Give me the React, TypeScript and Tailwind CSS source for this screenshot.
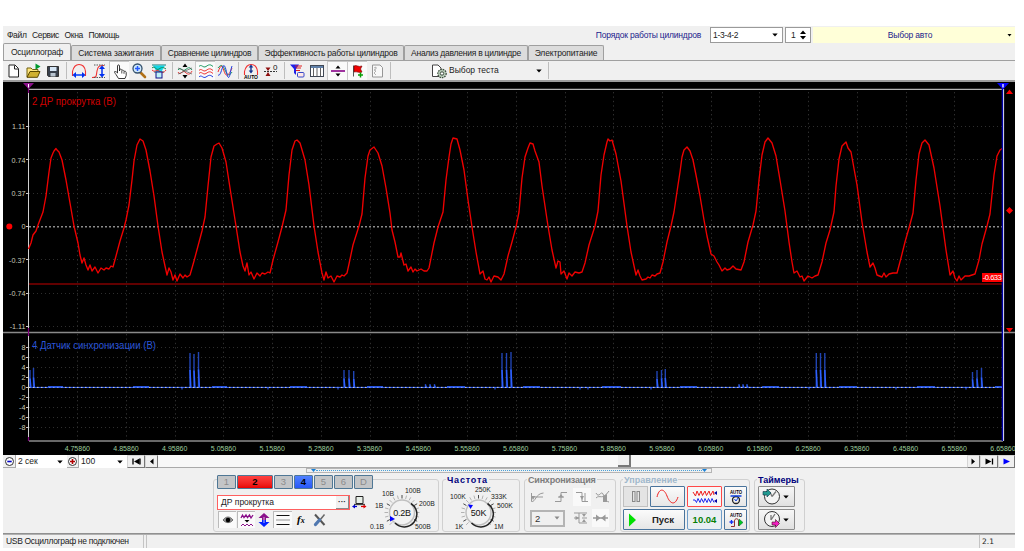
import type { ReactNode } from "react";
import clsx from "clsx";

const CHANNEL_TRACE =
  "28.5,249 31,243 33,235 36,231 38,225 43,212 46,196 49,172 51,158 53,153 54,151 56,148.5 57,150 59,152 62,160 64,170 66,180 70,203 74,226 78,243 80,255 82,263 84,258 86,265 88,270 90,265 92,271 95,267 98,273 101,268 104,270 106,268 109,269 111,266 113,267 116,256 120,241 124,228 126,220 129,205 132,180 134,161 137,145 140,139 143,141 146,150 150,171 154,196 158,226 162,252 165,266 167,275 169,268 171,272 173,280 175,275 177,281 180,274 183,278 185,275 187,277 190,275 194,261 198,246 202,231 205,217 208,186 211,157 214,146 217,144 219,143 222,148 226,162 230,188 236,226 240,252 243,266 245,271 247,263 249,275 251,272 254,279 257,273 260,276 262,273 265,274 268,272 270,273 273,260 278,242 282,227 286,210 289,175 292,150 295,141 297,140 300,143 305,160 309,185 314,226 318,252 322,273 324,280 326,272 328,278 331,276 334,282 337,276 340,277 " +
  "342,275 344,276 347,273 349,264 353,245 359,226 362,214 365,178 368,156 370,150 374,147 378,153 382,166 386,188 390,213 392,230 395,242 398,257 400,257 401,253 404,265 406,264 408,271 411,267 413,272 415,269 417,271 421,269 424,271 427,271 429,268 434,243 438,227 443,212 446,180 449,157 451,144 453,138 457,139 460,150 464,170 468,200 472,227 476,252 480,274 483,271 485,279 487,280 489,277 491,282 494,276 498,277 501,280 504,274 508,256 512,242 516,227 519,212 522,178 525,157 528,148 530,143 533,144 535,151 539,162 542,186 548,226 552,250 556,268 558,261 560,262 561,274 564,271 567,279 569,273 572,276 575,272 579,273 582,272 585,263 589,245 595,226 598,211 601,175 604,155 607,142 608,139 610,141 612,140 616,154 621,181 627,226 631,252 636,275 638,270 640,276 642,280 646,279 648,277 650,278 652,275 655,276 657,274 660,273 663,262 667,242 671,226 674,212 678,185 680,172 " +
  "682,157 684,150 687,147 690,151 693,160 696,175 700,196 704,220 707,236 711,254 714,256 717,262 719,265 722,271 725,268 727,270 730,269 733,266 736,269 741,270 744,262 748,242 753,225 756,211 759,180 762,155 765,142 768,138 772,143 776,156 780,180 785,211 789,242 792,262 794,273 797,271 800,277 802,276 804,281 808,276 812,278 815,276 818,275 822,262 826,243 830,230 834,212 836,186 839,159 842,146 846,142 848,148 851,152 857,185 862,222 867,252 870,267 873,263 875,268 877,275 882,277 884,273 886,277 889,274 893,273 897,273 901,258 905,242 909,228 913,213 916,180 919,154 922,143 925,140 929,145 934,168 940,206 946,250 950,275 953,271 955,278 957,281 959,276 961,280 965,276 969,276 975,274 979,260 982,244 987,226 990,214 994,175 997,156 1000,150 1003,148";

// [x, top] of every sync pulse
const PULSES = [
  [30, 370], [33.5, 368], [190, 353], [194, 354], [198.5, 352], [344, 370], [349, 370], [353.7, 371],
  [425.5, 384], [430, 384], [434.5, 384], [502, 353], [506.5, 353], [511, 352], [657, 371], [661.5, 370],
  [665.3, 369], [739, 384], [743, 384], [747, 384], [816.3, 353], [820.5, 353], [824.8, 353], [972.5, 372],
  [977, 370], [981.5, 368],
];

const BUMPS = [
  [48, 63], [133, 149], [212, 227], [290, 307], [367, 383], [447, 465], [523, 540], [602, 621], [680, 697],
  [762, 779], [839, 857], [917, 935], [995, 1003],
];

const DIPS = [182, 268, 338, 495, 580, 588, 651, 809, 896, 966];

const TIMES = Array.from({ length: 20 }, (_, i) => ({
  x: 77.3 + i * 48.72,
  label: (4.7586 + i * 0.1).toFixed(5),
}));

const VOLTS = ["1.11", "0.74", "0.37", "0", "-0.37", "-0.74", "-1.11"];
const SYNC_VOLTS = ["8", "6", "4", "2", "0", "-2", "-4", "-6", "-8"];

function Scope() {
  return (
    <svg width="1012" height="373" viewBox="3 82 1012 373" className="block shrink-0 bg-black">
      <g stroke="#2e2e2e" strokeWidth="1" strokeDasharray="1 3" fill="none">
        {TIMES.slice(0, -1).map(({ x }) => (
          <path key={x} d={`M${Math.round(x) + 0.5} 92V440`} strokeDasharray="1.4 3" />
        ))}
        {VOLTS.map((v, i) => (
          <path key={v} d={`M29 ${Math.round(127 + i * 33.3) - 0.5}H1002`} />
        ))}
        {SYNC_VOLTS.map((v, i) => (
          <path key={v} d={`M29 ${347.5 + i * 10}H1002`} />
        ))}
      </g>
      <path d="M29 226.8H1002" stroke="#8c8c8c" strokeWidth="1.5" strokeDasharray="2 2" />
      <path d="M29 89.3H1003" stroke="#b4b4b4" strokeWidth="1.2" />
      <path d="M3 332.5H1015" stroke="#8a8a8a" strokeWidth="1.6" />
      <path d="M29 441H1003" stroke="#686868" strokeWidth="1.8" />
      <path d="M28.5 92V441" stroke="#d0d0d0" strokeWidth="1" />
      <path d="M28.5 85V93M28.5 328V336M28.5 437V441" stroke="#80007d" strokeWidth="1.2" />
      <path d="M29 284H1003" stroke="#820000" strokeWidth="1.7" />
      <polyline points={CHANNEL_TRACE} fill="none" stroke="#f00000" strokeWidth="1.35" strokeLinejoin="round" />

      <path d="M29 387.4H1003" stroke="#2b5bff" strokeWidth="1" />
      <path d="M29 387.4H1003" stroke="#d8d8c8" strokeWidth="1" strokeDasharray="1.5 2.5" />
      <g stroke="#2e61ff" fill="none">
        {BUMPS.map(([a, b]) => (
          <path key={a} d={`M${a} 386.8H${b}`} strokeWidth="1.3" />
        ))}
        {DIPS.map((x) => (
          <path key={x} d={`M${x} 387V389.5`} strokeWidth="1" />
        ))}
        {PULSES.map(([x, top]) => (
          <g key={x}>
            <path d={`M${x} ${top}V387`} strokeWidth="1.4" opacity="0.7" />
            <path d={`M${x} ${top + (387 - top) * 0.5}L${x + 0.8} 387`} strokeWidth="1.5" />
          </g>
        ))}
      </g>

      <g fill="#c8c8b8" fontFamily="Liberation Sans, sans-serif" fontSize="7.2" textAnchor="end">
        {VOLTS.map((v, i) => (
          <text key={v} x="25.5" y={129.4 + i * 33.3}>
            {v}
          </text>
        ))}
        {SYNC_VOLTS.map((v, i) => (
          <text key={v} x="25.5" y={350 + i * 10}>
            {v}
          </text>
        ))}
      </g>
      <g stroke="#c8c8c8" strokeWidth="1">
        {VOLTS.map((v, i) => (
          <path key={v} d={`M26 ${Math.round(127 + i * 33.3) - 0.5}h2`} />
        ))}
        {SYNC_VOLTS.map((v, i) => (
          <path key={v} d={`M26 ${347.5 + i * 10}h2`} />
        ))}
      </g>
      <g fill="#9fce9f" fontFamily="Liberation Sans, sans-serif" fontSize="7" textAnchor="middle">
        {TIMES.map(({ x, label }) => (
          <text key={label} x={x} y="450.5">
            {label}
          </text>
        ))}
      </g>
      <text x="32" y="105" fill="#d00000" fontFamily="Liberation Sans, sans-serif" fontSize="10" textLength="84" lengthAdjust="spacingAndGlyphs">
        2 ДР прокрутка (В)
      </text>
      <text x="32" y="349" fill="#2b55d8" fontFamily="Liberation Sans, sans-serif" fontSize="10" textLength="124" lengthAdjust="spacingAndGlyphs">
        4 Датчик синхронизации (В)
      </text>

      <path d="M23 83h11l-5.5 6z" fill="#8a108a" />
      <path d="M28.5 84v3.5" stroke="#fff" strokeWidth="1" />
      <path d="M1002.5 84V441" stroke="#0000a8" strokeWidth="1.6" />
      <path d="M1003.6 89V441" stroke="#dcdcff" strokeWidth="1" />
      <path d="M997 83h12l-6 6.5z" fill="#0000ff" />
      <path d="M1003 84v3.5" stroke="#fff" strokeWidth="1.3" />
      <g fill="#ff0000">
        <circle cx="9.3" cy="226.5" r="3" />
        <path d="M1006 94h7l-3.5-4.5zM1006 328h7l-3.5 4.5zM1009.5 207l3.5 3.5-3.5 3.5-3.5-3.5z" />
        <rect x="982" y="273" width="20.500" height="9" />
      </g>
      <text x="982.8" y="280.3" fill="#fff" fontFamily="Liberation Sans, sans-serif" fontSize="7.6" textLength="19">
        -0.633
      </text>
    </svg>
  );
}

function Icon({ children, w = 20, h = 18 }: { children: ReactNode; w?: number; h?: number }) {
  return (
    <svg width={w} height={h} viewBox={`0 0 ${w} ${h}`} fill="none" className="shrink-0">
      {children}
    </svg>
  );
}

function Tool({ children, pressed }: { children: ReactNode; pressed?: boolean }) {
  return (
    <button
      className={clsx(
        "flex h-[19px] w-5 items-center justify-center",
        pressed && "border-l border-t border-[#c8c8c8] bg-[#fafafa]"
      )}
    >
      <Icon>{children}</Icon>
    </button>
  );
}

function Sep() {
  return <div className="ml-[3px] mr-[2px] h-[17px] w-px bg-[#bdbdbd]" />;
}

function Caret() {
  return (
    <svg width="6" height="4" viewBox="0 0 6 4" className="shrink-0">
      <path d="M0.3 0.5h5.4L3 3.5z" fill="#000" />
    </svg>
  );
}

const TABS = [
  { label: "Осциллограф", className: "w-[68px] h-[17px] bg-[#f0f0f0] tracking-[-0.25px]" },
  { label: "Система зажигания", className: "w-[90px] h-[15px] bg-[#dcdcdc] tracking-[-0.1px]" },
  { label: "Сравнение цилиндров", className: "w-[97px] h-[15px] bg-[#dcdcdc] tracking-[-0.3px]" },
  { label: "Эффективность работы цилиндров", className: "w-[146px] h-[15px] bg-[#dcdcdc] tracking-[-0.25px]" },
  { label: "Анализ давления в цилиндре", className: "w-[124px] h-[15px] bg-[#dcdcdc] tracking-[-0.25px]" },
  { label: "Электропитание", className: "w-[76px] h-[15px] bg-[#dcdcdc] tracking-[-0.15px]" },
];

function Toolbar() {
  return (
    <div className="flex h-[22px] items-center border-b-2 border-t border-b-[#9c9c9c] border-t-[#a0a0a0]">
      <Tool>
        <path d="M6 3h6l3.500 3.500v8.500H6z" fill="#fff" stroke="#222" />
        <path d="M11.500 3.500v3.500h3.500" stroke="#222" />
      </Tool>
      <Tool>
        <path d="M4 15V6h4l1.5 1.5H15V9" fill="#ffe680" stroke="#70600c" />
        <path d="M4 15.3L7 9.5h10L14.5 15.3z" fill="#d0b030" stroke="#5a4800" />
        <path d="M12.5 1.5l5 3-5 3.2z" fill="#009a30" />
      </Tool>
      <Tool>
        <path d="M4.500 4.500h11v10h-10l-1-1z" fill="#38404c" stroke="#333" />
        <rect x="7" y="5" width="6.500" height="4" fill="#d5e5f5" />
        <rect x="7.500" y="11" width="5" height="3.500" fill="#b8c4d0" />
      </Tool>
      <Sep />
      <Tool>
        <path d="M3.500 14v-4.500C4.500 5 6.500 2.500 10 2.500s6 3 6.500 7V14" stroke="#f13030" strokeWidth="1.100" />
        <path d="M5 13h10" stroke="#003cff" strokeWidth="1.500" />
        <path d="M3.500 13l3.500-3v6zM16.500 13L13 10v6z" fill="#0030f0" />
      </Tool>
      <Tool>
        <path d="M3 15.500c5 0 4-1 5-6.500 1-5 2-5.500 7-5.500" stroke="#f13030" strokeWidth="1.100" />
        <path d="M5 3h11M5 15.500h11" stroke="#555" strokeDasharray="1.500 1" />
        <path d="M13 5v9" stroke="#0030f0" strokeWidth="1.500" />
        <path d="M13 3.500l3 3.500h-6zM13 15.500l3-3.500h-6z" fill="#0030f0" />
      </Tool>
      <Tool pressed>
        <path
          d="M7.500 11V4c0-1.500 2-1.500 2 0v5l.3-1.500c1-1 2 0 2 1 1-1 2 0 2.200 1 1-.8 2 0 2.200 1v3l-1.200 3H8.500L6 12.500C4.500 10.500 4 9.500 5 9.500s1.500.5 2.500 1.500z"
          fill="#fff"
          stroke="#222"
          strokeWidth="0.9"
        />
        <path d="M11.800 9v2.500M14 9.800v2" stroke="#222" strokeWidth="0.800" />
      </Tool>
      <Tool>
        <path d="M11.500 10.500l4.500 4.500" stroke="#b07018" strokeWidth="2.600" strokeLinecap="round" />
        <circle cx="8.500" cy="6.500" r="4.500" fill="#cfe9fb" stroke="#34506c" strokeWidth="1.300" />
        <path d="M6 6.500h5M8.500 4v5" stroke="#2458ff" strokeWidth="1.500" />
      </Tool>
      <Tool>
        <path d="M3 3h14M5 10h10" stroke="#107878" />
        <path d="M4 3.500h12l-3.500 6h-5z" fill="#10d8e8" />
        <path d="M3 6c3-3 4 3 7 1s4-2 7 0" stroke="#15895a" />
        <path d="M3 8c3 3 4-1 7 1s5 2 7-1" stroke="#e33" />
        <rect x="7" y="10" width="6" height="6" fill="#bdf1f5" stroke="#118" />
      </Tool>
      <Sep />
      <Tool>
        <path d="M3 8c3-4 4 2 7 0s4-4 7 0" stroke="#189860" />
        <path d="M3 10c3 5 4-3 7 0s5 3 7-1" stroke="#ef4040" />
        <path d="M3 6l14 6M3 12l14-6" stroke="#555" strokeWidth="0.700" />
        <path d="M10 1.500L12.500 5h-5zM10 16.500l2.500-3.500h-5z" fill="#000" />
      </Tool>
      <Tool pressed>
        <path d="M3 4.500c2.500-3 4 2 7 0s4-2.500 7 0" stroke="#189860" />
        <path d="M3 8.500c2.500-3 4 2 7 0s4-2.500 7 0M3 11.500c2.500-3 4 2 7 0s4-2.500 7 0" stroke="#ef3030" />
        <path d="M3 15c2.500-3 4 2 7 0s4-2.500 7 0" stroke="#2040e0" />
      </Tool>
      <Tool>
        <path d="M3 6c3-4 5-3 7 2s4 7 7 2" stroke="#189860" />
        <path d="M3 10c3-8 4-7 6-1s4 6 8-3" stroke="#ef3030" />
        <path d="M3 13c3 2 4-10 6-9.500s3 12 4.500 12S15 10 17 4" stroke="#2040e0" />
      </Tool>
      <Sep />
      <Tool>
        <path d="M3.500 13V9.500c1-4.500 3-7 6.500-7s6 3 6.500 7V13" stroke="#f13030" strokeWidth="1.100" />
        <path d="M10 4v6" stroke="#103090" strokeWidth="1.400" />
        <path d="M10 2.500l2.300 3H7.700zM10 11.500l2.300-3H7.700z" fill="#103090" />
        <text x="3" y="17" fill="#000" fontSize="5.300" fontWeight="bold" textLength="14" lengthAdjust="spacingAndGlyphs">AUTO</text>
      </Tool>
      <Tool>
        <path d="M3 9.500h13" stroke="#333" strokeDasharray="2 1" />
        <path d="M7 9l2.500-3.500h-5zM7 10l2.500 4h-5z" fill="#901010" />
        <text x="12" y="8" fill="#111" fontSize="8">0</text>
      </Tool>
      <Sep />
      <Tool>
        <path d="M3 2.500h9L9 7v6L7 11V7z" fill="#2020e8" />
        <path d="M8 4h7M9 6l5 0M9 8.500h4" stroke="#e02020" />
        <rect x="10.500" y="10.500" width="6.500" height="4.500" rx="1" fill="#ffe8e8" stroke="#3548c8" />
      </Tool>
      <Tool>
        <rect x="3.500" y="3.500" width="13" height="11" fill="#fff" stroke="#404854" />
        <path d="M4 5h12" stroke="#6080a8" strokeWidth="2" />
        <path d="M6.500 6v8M10 6v8M13.500 6v8" stroke="#606060" />
      </Tool>
      <Tool pressed>
        <path d="M3 9h14" stroke="#880088" strokeWidth="1.600" />
        <path d="M10 3.500l2.500 3h-5zM10 14.500l2.500-3h-5z" fill="#000" />
      </Tool>
      <Tool pressed>
        <path d="M5.500 3.500v11" stroke="#555" />
        <path d="M6 4c3-1.500 4 1.500 8 0l-1.500 3L14 10c-3 1.500-5-1-8 0z" fill="#f00000" stroke="#700000" strokeWidth="0.600" />
        <path d="M12.500 10.500v5M10 13h5" stroke="#08a008" strokeWidth="1.500" />
      </Tool>
      <Tool>
        <path d="M5.500 3h7.500l2.500 2.500v9.500h-10z" fill="#f8f8f8" stroke="#969696" />
        <path d="M7 6l2-1v2l-2 1 2 1-2 2 2 2" stroke="#a0a0a0" strokeWidth="0.800" />
      </Tool>
      <Sep />
      <div className="ml-[36px] flex w-[113px] items-center">
        <Icon>
          <path d="M3.500 3h5.500l3 3v8.500H3.500z" fill="#fff" stroke="#444" />
          <circle cx="13" cy="11.500" r="4.200" fill="#b8ccb8" stroke="#3c4c3c" strokeWidth="1.200" strokeDasharray="1.600 0.900" />
          <circle cx="13" cy="11.500" r="1.700" fill="#fff" stroke="#3c4c3c" />
        </Icon>
        <span className="flex-1 whitespace-nowrap">Выбор теста</span>
        <Caret />
      </div>
      <div className="ml-[3px]">
        <Sep />
      </div>
    </div>
  );
}

const BOX_BUTTON = "flex items-center justify-center border border-r-[#777] border-b-[#777] border-l-[#d5d5d5] border-t-[#d5d5d5] bg-[#f0f0f0]";

function ScrollRow() {
  return (
    <div className="flex h-[13px] items-stretch bg-[#f8f8f8]">
      <div className="flex w-[13px] items-center justify-center border-b border-r border-[#aaa] bg-[#f0f0f0]">
        <Icon w={11} h={11}>
          <circle cx="5.500" cy="5.500" r="4" fill="#fff" stroke="#333" />
          <path d="M3.300 5.500h4.400" stroke="#0000c8" strokeWidth="1.600" />
        </Icon>
      </div>
      <div className="flex w-[51px] items-center justify-between bg-white pl-[2px] pr-[4px]">
        <span>2 сек</span>
        <Caret />
      </div>
      <div className="flex w-[12px] items-center justify-center border-b border-r border-[#aaa] bg-[#f0f0f0]">
        <Icon w={11} h={11}>
          <circle cx="5.500" cy="5.500" r="4" fill="#fff" stroke="#333" />
          <path d="M3 5.500h5M5.500 3v5" stroke="#b00000" strokeWidth="1.600" />
        </Icon>
      </div>
      <div className="flex w-[48px] items-center justify-between bg-white pl-[2px] pr-[4px]">
        <span>100</span>
        <Caret />
      </div>
      <div className={clsx(BOX_BUTTON, "w-[18px]")}>
        <Icon w={9} h={7}>
          <path d="M1 0.500v6M8 0.500v6" stroke="#000" strokeWidth="1.300" />
          <path d="M7.500 0.500v6L2 3.500z" fill="#000" />
        </Icon>
      </div>
      <div className={clsx(BOX_BUTTON, "w-[13px]")}>
        <Icon w={5} h={7}>
          <path d="M4.500 0.500v6L1 3.500z" fill="#000" />
        </Icon>
      </div>
      <div className="flex flex-1 border-b border-[#aaa]">
        <div className="ml-[460px] w-[13px] border-b-2 border-r-2 border-[#777] bg-[#f0f0f0]" />
      </div>
      <div className={clsx(BOX_BUTTON, "w-[13px]")}>
        <Icon w={5} h={7}>
          <path d="M0.500 0.500v6L4 3.500z" fill="#000" />
        </Icon>
      </div>
      <div className={clsx(BOX_BUTTON, "w-[18px]")}>
        <Icon w={9} h={7}>
          <path d="M7.500 0.500v6" stroke="#000" strokeWidth="1.300" />
          <path d="M0.500 0.500v6L6.500 3.500z" fill="#000" />
        </Icon>
      </div>
      <div className={clsx(BOX_BUTTON, "w-[17px]")}>
        <Icon w={7} h={7}>
          <path d="M0.500 0.500v6L7 3.500z" fill="#0000ff" />
        </Icon>
      </div>
    </div>
  );
}

function Group({ title, titleClass, className, children }: { title?: string; titleClass?: string; className: string; children: ReactNode }) {
  return (
    <div className={clsx("relative h-[53px] shrink-0 rounded-[3px] border border-[#d0d0d0]", className)}>
      {title && (
        <div
          className={clsx(
            "absolute top-[-5px] left-[2px] bg-[#f0f0f0] px-[1px] text-[9px] leading-[11px] font-bold whitespace-nowrap",
            titleClass
          )}
        >
          {title}
        </div>
      )}
      {children}
    </div>
  );
}

const CHANNELS = [
  { label: "1", className: "w-[19px] bg-[#c3c5c7] text-[#8c8c8c]" },
  { label: "2", className: "w-[36px] bg-linear-to-b from-[#ff4040] to-[#e80000] font-bold text-black" },
  { label: "3", className: "w-[19px] bg-[#c3c5c7] text-[#8c8c8c]" },
  { label: "4", className: "w-[19px] bg-linear-to-b from-[#5080ff] to-[#2858f8] font-bold text-black" },
  { label: "5", className: "w-[19px] bg-[#c3c5c7] text-[#8c8c8c]" },
  { label: "6", className: "w-[19px] bg-[#c3c5c7] text-[#8c8c8c]" },
  { label: "D", className: "w-[19px] bg-[#c3c5c7] text-[#8c8c8c]" },
];

type KnobLabel = { x: number; y: number; text: string };

function Knob({ w, cx, cy, value, pointer, labels, className }: { w: number; cx: number; cy: number; value: string; pointer: string; labels: KnobLabel[]; className?: string }) {
  const ticks = Array.from({ length: 19 }, (_, i) => ((135 + i * 15) * Math.PI) / 180);
  return (
    <svg width={w} height="51" viewBox={`0 0 ${w} 51`} fontFamily="Liberation Sans, sans-serif" className={clsx("block shrink-0", className)}>
      <g strokeWidth="0.9">
        {ticks.map((a, i) => (
          <path
            key={a}
            stroke={i % 4 === 1 ? "#333" : "#aaa"}
            d={`M${cx + 14 * Math.cos(a)} ${cy + 14 * Math.sin(a)}L${cx + 17.5 * Math.cos(a)} ${cy + 17.5 * Math.sin(a)}`}
          />
        ))}
      </g>
      <circle cx={cx} cy={cy} r="12.5" fill="#f2f2f2" stroke="#c0c0c0" strokeWidth="1.5" />
      <path d={`M${cx + 9} ${cy - 9}A12.700 12.700 0 1 1 ${cx - 7} ${cy + 10.5}`} fill="none" stroke="#222" strokeWidth="1.5" />
      <path d={pointer} fill="#0000ff" />
      <text x={cx} y={cy + 3} fontSize="9" textAnchor="middle" fill="#111" letterSpacing="-0.2">
        {value}
      </text>
      <g fontSize="6.8" fill="#222">
        {labels.map((l) => (
          <text key={l.text} x={l.x} y={l.y}>
            {l.text}
          </text>
        ))}
      </g>
    </svg>
  );
}

function ChannelGroup() {
  return (
    <Group className="flex w-[226px]">
      <div className="mt-[-5px] ml-[3px] w-[157px]">
        <div className="flex h-[14px] gap-px bg-[#f0f0f0]">
          {CHANNELS.map((c) => (
            <button
              key={c.label}
              className={clsx("flex items-center justify-center rounded-[1px] border border-[#4f7795] text-[9.5px] leading-none", c.className)}
            >
              {c.label}
            </button>
          ))}
        </div>
        <div className="mt-[5px] flex items-center">
          <div className="flex h-[15px] w-[133px] items-center justify-between border border-[#ff6060] bg-white pl-[3px]">
            <span>ДР прокрутка</span>
            <span className="flex h-[13px] w-[13px] items-center justify-center border-r border-b border-[#888] bg-[#f0f0f0] text-[8px] leading-none font-bold">
              ···
            </span>
          </div>
          <Icon w={18} h={16}>
            <path d="M6 2.500h7v7H6z" fill="#e8f0e8" stroke="#222" />
            <path d="M4 10.500h11" stroke="#444" strokeWidth="1.300" />
            <path d="M7 12.500H4" stroke="#0000d0" strokeWidth="1.200" />
            <path d="M5 10.500v4l-3-2z" fill="#0000d0" />
            <path d="M11 12.500h3" stroke="#e00000" strokeWidth="1.200" />
            <path d="M13.500 10.500v4l3-2z" fill="#e00000" />
          </Icon>
        </div>
        <div className="mt-px flex h-[17px] items-center">
          <div className="ml-px flex h-[17px] w-[18px] items-center justify-center border-t border-l border-[#bbb] bg-[#fafafa]">
            <Icon w={12} h={10}>
              <path d="M1 5c3-4 7-4 10 0-3 3.500-7 3.500-10 0z" fill="#999" stroke="#555" strokeWidth="0.800" />
              <circle cx="6" cy="5" r="2.300" fill="#000" />
            </Icon>
          </div>
          <div className="ml-px flex h-[17px] w-[18px] items-center justify-center border-t border-l border-[#bbb] bg-[#fafafa]">
            <Icon w={14} h={14}>
              <path d="M1 5l1.500-3L4 4.500 6 2l1.500 2.500L9.500 2 11 5l2-3" stroke="#8a108a" strokeWidth="1.300" />
              <path d="M7 9.500L9.500 7h-5z" fill="#000" />
              <path d="M1 13l2-2 2 2 2-2 2 2 2-2 2 2" stroke="#8a108a" />
            </Icon>
          </div>
          <Icon w={18} h={16}>
            <path d="M9 1l5.500 5H11v2H7V6H3.500z" fill="#8a108a" />
            <path d="M9 15l5.500-5H11V8H7v2H3.500z" fill="#0020ff" />
            <path d="M9 5v6" stroke="#fff" strokeWidth="0.700" />
          </Icon>
          <div className="flex h-[17px] w-[19px] items-center justify-center border-t border-l border-[#bbb] bg-[#fafafa]">
            <Icon w={14} h={12}>
              <path d="M0.500 1.500h13M0.500 10.500h13" stroke="#111" />
              <path d="M0.500 6h13" stroke="#333" strokeDasharray="1 1" />
            </Icon>
          </div>
          <span className="w-[20px] pl-[5px] font-['Liberation_Serif',serif] text-[11px] leading-none font-bold whitespace-nowrap text-black italic">
            f<span className="text-[8px]">x</span>
          </span>
          <Icon w={16} h={14}>
            <path d="M3 1.500l9.500 10.500" stroke="#555" strokeWidth="2" />
            <path d="M12.500 1.500L8 7" stroke="#666" strokeWidth="1.500" />
            <path d="M7.500 7L3.500 11.500" stroke="#5078b0" strokeWidth="3.300" strokeLinecap="round" />
          </Icon>
        </div>
      </div>
      <Knob
        className="ml-[-8px]"
        w={74}
        cx={37}
        cy={32.5}
        value="0.2В"
        pointer="M25 36l5 3-5 2.500z"
        labels={[
          { x: 17, y: 15.5, text: "10В" },
          { x: 40, y: 12.5, text: "100В" },
          { x: 10, y: 27.5, text: "1В" },
          { x: 54, y: 26, text: "200В" },
          { x: 5, y: 48.5, text: "0.1В" },
          { x: 50, y: 48.5, text: "500В" },
        ]}
      />
    </Group>
  );
}

const BLUE_BUTTON = "flex items-center justify-center rounded-[1px] border border-[#4a749c] bg-linear-to-b from-[#fbfbfb] to-[#e6e6e6]";

function BottomPanel() {
  return (
    <div className="h-[66px] border-b border-[#909090]">
      <div className="ml-[303px] flex h-[5px] w-[406px] items-center justify-between border border-[#b5b5b5] px-[4px]">
        <Icon w={5} h={3}>
          <path d="M0 0h5L2.500 3z" fill="#1880d8" />
        </Icon>
        <div className="h-px flex-1 border-t border-dotted border-[#48a0d8]" />
        <Icon w={5} h={3}>
          <path d="M0 0h5L2.500 3z" fill="#1880d8" />
        </Icon>
      </div>
      <div className="mt-[6px] ml-[210px] flex gap-[3px]">
        <ChannelGroup />
        <Group title="Частота" titleClass="text-[#00007c] tracking-[0.8px] ml-px" className="w-[78px]">
          <Knob
            w={76}
            cx={35.5}
            cy={32.5}
            value="50K"
            pointer="M25 24.500l5 .5-2.500 4z"
            labels={[
              { x: 32, y: 11.5, text: "250K" },
              { x: 7, y: 19, text: "100K" },
              { x: 48, y: 19, text: "333K" },
              { x: 54, y: 28, text: "500K" },
              { x: 12, y: 48.5, text: "1K" },
              { x: 51, y: 48.5, text: "1M" },
            ]}
          />
        </Group>
        <Group title="Синхронизация" titleClass="text-[#7d7d7d] tracking-[-0.2px]" className="ml-px w-[92px] px-[4px] pt-[8px]">
          <div className="flex h-[18px] items-center gap-px">
            <Icon>
              <path d="M2.500 5v8.500c4 1 4-8 12-8.500M6 9h8" stroke="#999" />
              <path d="M2 8h4.500L4 12z" fill="#999" />
            </Icon>
            <Icon w={22}>
              <path d="M5 13.500h6V4.500h6M8 9h6" stroke="#999" />
              <path d="M8.500 9.500h5L11 6z" fill="#999" />
            </Icon>
            <Icon>
              <rect width="18" height="18" fill="#f9f9f9" />
              <path d="M3 4.500h6v9h6M12 5v8" stroke="#999" />
              <path d="M7 8h4l-2 4z" fill="#999" />
            </Icon>
            <Icon>
              <path d="M2 5c3 6 5-3 7 1s2 7 6 8M2 10c4-4 6 3 13-7" stroke="#999" />
              <path d="M9 8v6h4V6z" fill="#999" />
            </Icon>
          </div>
          <div className="mt-[3px] flex h-[18px] items-center">
            <div className="ml-px flex h-[17px] w-[35px] items-center justify-between border-2 border-[#b4b4b4] pr-[3px] pl-[3px] text-[9.5px] text-[#333]">
              2
              <svg width="6" height="4" viewBox="0 0 6 4">
                <path d="M0.500 0.500h5L3 3.500z" fill="#8a8a8a" />
              </svg>
            </div>
            <div className="ml-[6px]">
              <Icon>
                <path d="M3 4h5v10h8M3 9h5M8 4h8M11 9h5" stroke="#999" />
                <path d="M4.500 7l4 2-4 2zM11 5h4l-2 3zM11 13h4l-2-3z" fill="#999" />
              </Icon>
            </div>
            <Icon>
              <rect x="1" width="17" height="18" fill="#f9f9f9" />
              <path d="M2 9h15" stroke="#999" strokeWidth="1.500" />
              <path d="M5 5.500l4.500 3.500L5 12.500zM14.500 5.500L10 9l4.500 3.500z" fill="#999" />
            </Icon>
          </div>
        </Group>
        <Group
          title="Управление"
          titleClass="text-[#a0b8cc]"
          className="ml-px grid w-[130px] grid-cols-[25px_35px_35px_23px] grid-rows-[21px_21px] gap-x-[2px] gap-y-[2px] pt-[6px] pl-[2px]"
        >
          <button className="flex items-center justify-center border border-[#c0c0c0] bg-[#e4e4e4]">
            <Icon w={10} h={13}>
              <rect x="1.500" y="1.500" width="2.500" height="10" stroke="#888" />
              <rect x="6" y="1.500" width="2.500" height="10" stroke="#888" />
            </Icon>
          </button>
          <button className={BLUE_BUTTON}>
            <Icon w={24} h={16}>
              <path d="M1 8c2-9 7-9 10-1s8 10 11 1" stroke="#f02020" />
            </Icon>
          </button>
          <button className="flex items-center justify-center rounded-[1px] border border-[#ff4848] bg-[#f7f7f7]">
            <Icon w={26} h={16}>
              <path d="M1 3l2.500 4L5 2l2 4.500L9 2l1.500 4.500L13 2l1.500 4.500L17 2l1.500 4.500L21 2l1 4" stroke="#f02020" />
              <path d="M1 11h2l1.500 2.500L6 9.500l2 4 1.500-4 2 4 1.500-4 2 4 1.500-4 2 4 1.500-4 2 4" stroke="#2028f0" />
              <path d="M25 2v4l-3-2zM25 10v4l-3-2z" fill="#0000a0" />
            </Icon>
          </button>
          <button className={BLUE_BUTTON}>
            <Icon w={18} h={18}>
              <text x="3" y="6" fill="#000" fontSize="5.500" fontWeight="bold" textLength="12" lengthAdjust="spacingAndGlyphs">AUTO</text>
              <circle cx="9" cy="12" r="3.500" stroke="#222" strokeWidth="1.300" />
              <path d="M3.500 8h11" stroke="#1040e0" strokeWidth="1.500" />
              <path d="M7.500 11l1.500 2 2-3" stroke="#1040e0" />
            </Icon>
          </button>
          <button className={clsx(BLUE_BUTTON, "col-span-2 text-[9.5px] font-bold")}>
            <Icon w={25} h={14}>
              <path d="M2 0.500v13l7-6.500z" fill="#00e000" />
            </Icon>
            <span className="pr-[7px]">Пуск</span>
          </button>
          <button className="flex items-center justify-center rounded-[2px] border border-[#6f9dc8] bg-[#e9eef2] text-[9.5px] font-bold text-[#078007]">
            10.04
          </button>
          <button className={BLUE_BUTTON}>
            <Icon w={18} h={18}>
              <text x="3" y="6" fill="#000" fontSize="5.500" fontWeight="bold" textLength="12" lengthAdjust="spacingAndGlyphs">AUTO</text>
              <path d="M2.500 11h4M4.500 9v4" stroke="#1030f0" strokeWidth="1.300" />
              <path d="M4 15.500h3.500V10c0-3 4-3 4 0v5" stroke="#903030" />
              <path d="M12 8v7l4-3.500z" fill="#00c820" stroke="#063" strokeWidth="0.500" />
            </Icon>
          </button>
        </Group>
        <Group title="Таймеры" titleClass="text-[#00007c]" className="ml-px w-[51px] pt-[6px] pl-[3px]">
          <button className="flex h-[21px] w-[37px] items-center justify-between rounded-[1px] border border-[#8b8b8b] bg-linear-to-b from-[#f7f7f7] to-[#e0e0e0] pr-[5px] pl-[2px]">
            <Icon w={21} h={19}>
              <circle cx="11" cy="9.500" r="7.500" fill="#f4f4f4" stroke="#333" />
              <path d="M11 9.500l4-5M11 9.500L9 5" stroke="#777" strokeWidth="1.300" />
              <path d="M2 4.500h4V2l4 4-4 4V8H2z" fill="#209a90" stroke="#134" strokeWidth="0.600" />
            </Icon>
            <Caret />
          </button>
          <button className="mt-[2px] flex h-[21px] w-[37px] items-center justify-between rounded-[1px] border border-[#8b8b8b] bg-linear-to-b from-[#f7f7f7] to-[#e0e0e0] pr-[5px] pl-[2px]">
            <Icon w={21} h={19}>
              <circle cx="11" cy="9" r="7.500" fill="#f4f4f4" stroke="#333" />
              <path d="M10 10l4-6M10 10V5" stroke="#777" strokeWidth="1.300" />
              <path d="M11 12h3.500V9.500l4 4-4 4V15H11z" fill="#f020c0" stroke="#412" strokeWidth="0.600" />
            </Icon>
            <Caret />
          </button>
        </Group>
      </div>
    </div>
  );
}

export default function App() {
  return (
    <div className="h-[551px] w-[1024px] overflow-hidden bg-white pt-[26px] pl-[3px] font-['Liberation_Sans',sans-serif] text-[8.5px] leading-[11px] text-[#222]">
      <div className="flex h-[522px] w-[1012px] flex-col bg-[#f0f0f0]">
        <div className="flex h-[18px] items-center whitespace-nowrap">
          <nav className="flex gap-[5.5px] pl-[4px] tracking-[-0.35px]">
            <span>Файл</span>
            <span>Сервис</span>
            <span>Окна</span>
            <span>Помощь</span>
          </nav>
          <span className="mr-[9px] ml-auto tracking-[-0.2px] text-[#1c1c8c]">Порядок работы цилиндров</span>
          <div className="mr-[2px] flex h-[16px] w-[73px] items-center justify-between border border-[#9a9a9a] bg-white pr-[4px] pl-[2px]">
            <span className="tracking-[-0.3px]">1-3-4-2</span>
            <Caret />
          </div>
          <div className="mr-[2px] flex h-[16px] w-[26px] items-center justify-between border border-[#9a9a9a] bg-white pr-[4px] pl-[5px]">
            <span>1</span>
            <Icon w={6} h={10}>
              <path d="M0 4h6L3 0.500zM0 6h6L3 9.500z" fill="#000" />
            </Icon>
          </div>
          <div className="flex h-[16px] w-[202px] items-center bg-[#ffffd8] pr-[3px] text-[#1c1c8c]">
            <span className="flex-1 text-center tracking-[-0.15px]">Выбор авто</span>
            <svg width="5" height="3" viewBox="0 0 5 3">
              <path d="M0.500 0h4L2.500 2.500z" fill="#000" />
            </svg>
          </div>
        </div>
        <div className="flex h-[16px] items-end">
          {TABS.map((t) => (
            <div
              key={t.label}
              className={clsx(
                "flex items-center justify-center rounded-t-[2px] border border-b-0 border-[#9f9f9f] whitespace-nowrap",
                t.className
              )}
            >
              {t.label}
            </div>
          ))}
        </div>
        <Toolbar />
        <Scope />
        <ScrollRow />
        <BottomPanel />
        <footer className="flex h-[14px] items-stretch border-t border-[#b0b0b0]">
          <div className="w-[141px] border-r border-[#c4c4c4] pl-[3px] leading-[13px] tracking-[-0.32px] whitespace-nowrap">
            USB Осциллограф не подключен
          </div>
          <div className="ml-[2px] flex-1 border-l border-[#c4c4c4]" />
          <div className="w-[36px] border-l border-[#c4c4c4] pl-[2px] font-['DejaVu_Sans',sans-serif] text-[7.5px] leading-[13px]">2.1</div>
        </footer>
      </div>
    </div>
  );
}
